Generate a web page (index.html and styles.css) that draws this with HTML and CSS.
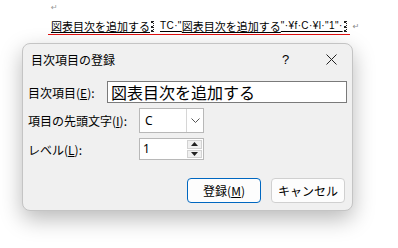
FILE: index.html
```html
<!DOCTYPE html>
<html lang="ja">
<head>
  <meta charset="UTF-8" />
  <title>目次項目の登録</title>
  <link rel="stylesheet" href="styles.css">
</head>
<body>
  <div class="doc">
    <div class="para-mark">↵</div>
    <div class="doc-line">
      <span class="entry">図表目次を追加する</span><span class="field-mark"></span><span class="code">TC·"</span><span class="code-jp">図表目次を追加する</span><span class="code">"·¥f·C·¥l·"1"·</span><span class="field-mark"></span><span class="para-end">↵</span>
    </div>
  </div>

  <div class="dialog">
    <div class="titlebar">
      <span class="title">目次項目の登録</span>
      <span class="help">?</span>
      <span class="close">
        <svg width="11" height="11" viewBox="0 0 11 11"><path d="M0.5 0.5L10.5 10.5M10.5 0.5L0.5 10.5" stroke="#222" stroke-width="1"/></svg>
      </span>
    </div>

    <div class="body">
      <div class="row">
        <label class="label label-short">目次項目(<u>E</u>):</label>
        <div class="text-input">図表目次を追加する</div>
      </div>
      <div class="row">
        <label class="label label-long">項目の先頭文字(<u>I</u>):</label>
        <div class="combo">
          <span class="combo-value">C</span>
          <span class="combo-button">
            <svg width="9" height="5" viewBox="0 0 9 5"><path d="M0.5 0.5L4.5 4.5L8.5 0.5" fill="none" stroke="#555" stroke-width="1"/></svg>
          </span>
        </div>
      </div>
      <div class="row">
        <label class="label label-long">レベル(<u>L</u>):</label>
        <div class="spin">
          <span class="spin-value">1</span>
          <span class="spin-buttons">
            <span class="spin-btn">
              <svg width="7" height="4" viewBox="0 0 7 4"><path d="M0 4L3.5 0L7 4Z" fill="#222"/></svg>
            </span>
            <span class="spin-btn">
              <svg width="7" height="4" viewBox="0 0 7 4"><path d="M0 0L3.5 4L7 0Z" fill="#222"/></svg>
            </span>
          </span>
        </div>
      </div>

      <div class="actions">
        <button class="btn btn-default">登録(<u>M</u>)</button>
        <button class="btn">キャンセル</button>
      </div>
    </div>
  </div>
</body>
</html>
```

FILE: styles.css
```css
body {
  margin: 0;
  background-color: #fff;
  font-family: "Noto Sans CJK JP", "Noto Sans", sans-serif;
  color: #000;
  width: 398px;
  height: 248px;
  overflow: hidden;
}
.doc {
  padding: 3px 0 0 48px;
}
.para-mark {
  font-family: "DejaVu Sans", sans-serif;
  font-size: 8px;
  color: #999;
  height: 14px;
  padding-left: 3px;
}
.doc-line {
  display: flex;
  align-items: flex-end;
  width: 302px;
  height: 17px;
  border-bottom: 1px solid #e01010;
  white-space: nowrap;
}
.entry, .code-jp {
  font-size: 11px;
  line-height: 16px;
  text-decoration: underline;
  text-underline-offset: 1px;
}
.entry {
  padding-left: 3px;
}
.code {
  font-family: "Liberation Sans", sans-serif;
  font-size: 10px;
  letter-spacing: 0.4px;
  line-height: 16px;
  text-decoration: underline;
  text-underline-offset: 2px;
}
.field-mark {
  display: inline-block;
  width: 2px;
  height: 11px;
  margin: 0 6px 2px 1px;
  border-left: 2px dotted #222;
  border-right: 1px dotted #222;
}
.para-end {
  font-family: "DejaVu Sans", sans-serif;
  font-size: 8px;
  color: #888;
  line-height: 14px;
}
.dialog {
  margin: 8px 0 0 22px;
  width: 329px;
  height: 166px;
  border: 1px solid #c4c4c4;
  border-radius: 8px;
  background-color: #f0f0f0;
  box-shadow: 0 8px 22px rgba(0, 0, 0, 0.28);
  font-size: 12px;
}
.titlebar {
  display: flex;
  align-items: center;
  height: 30px;
  padding: 0 0 0 8px;
}
.title {
  flex: 1;
  font-size: 12px;
}
.help {
  font-family: "Liberation Sans", sans-serif;
  font-size: 13px;
  width: 44px;
}
.close {
  display: flex;
  width: 26px;
}
.body {
  padding: 7px 5px 0 5px;
}
.row {
  display: flex;
  align-items: center;
  margin-bottom: 5px;
}
.label {
  flex: none;
  font-size: 12px;
}
.label-short {
  width: 79px;
}
.label-long {
  width: 111px;
}
.text-input {
  flex: 1;
  height: 20px;
  border: 1px solid #7a7a7a;
  background-color: #fff;
  font-size: 16px;
  line-height: 20px;
  padding-left: 3px;
}
.combo {
  display: flex;
  width: 63px;
  height: 23px;
  border: 1px solid #b8b8b8;
  background-color: #fff;
}
.combo-value {
  flex: 1;
  font-family: "Noto Sans", sans-serif;
  font-size: 12px;
  line-height: 23px;
  padding-left: 5px;
}
.combo-button {
  display: flex;
  align-items: center;
  justify-content: center;
  width: 16px;
  border-left: 1px solid #d6d6d6;
}
.spin {
  display: flex;
  width: 63px;
  height: 20px;
  border: 1px solid #b8b8b8;
  background-color: #fff;
}
.spin-value {
  flex: 1;
  font-family: "Noto Sans", sans-serif;
  font-size: 12px;
  line-height: 20px;
  padding-left: 3px;
}
.spin-buttons {
  display: flex;
  flex-direction: column;
  width: 15px;
  padding: 1px 1px 1px 0;
  gap: 1px;
}
.spin-btn {
  flex: 1;
  display: flex;
  align-items: center;
  justify-content: center;
  background-color: #f0f0f0;
  border: 1px solid #d2d2d2;
}
.actions {
  display: flex;
  justify-content: flex-end;
  gap: 10px;
  margin-top: 18px;
  padding-right: 2px;
}
.btn {
  width: 74px;
  height: 25px;
  border: 1px solid #d0d0d0;
  border-radius: 4px;
  background-color: #fdfdfd;
  font-family: "Noto Sans CJK JP", sans-serif;
  font-size: 12px;
  color: #000;
  padding: 0;
}
.btn-default {
  border: 1.5px solid #0067c0;
}
```
